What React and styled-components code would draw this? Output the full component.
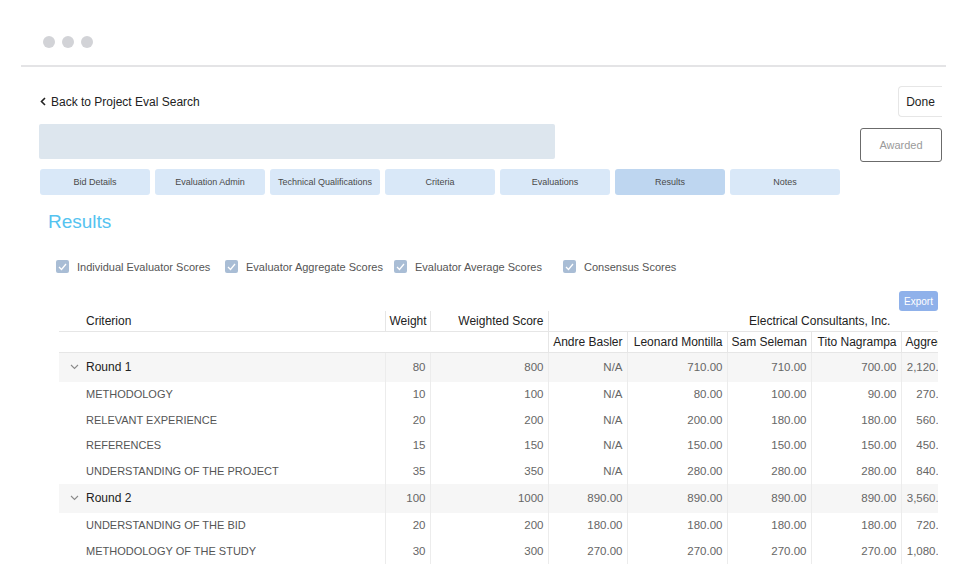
import React from "react";
import styled, { createGlobalStyle } from "styled-components";

const GlobalStyle = createGlobalStyle`
  body {
    margin: 0;
    background: #fff;
    font-family: "Liberation Sans", Arial, Helvetica, sans-serif;
    color: #333;
  }
`;

const Page = styled.div`
  width: 963px;
  height: 588px;
  overflow: hidden;
`;

const TitleBar = styled.div`
  display: flex;
  gap: 7px;
  height: 29px;
  padding: 36px 0 0 22px;
  margin: 0 17px 0 21px;
  border-bottom: 2px solid #e4e4e6;
`;

const Dot = styled.span`
  width: 12px;
  height: 12px;
  border-radius: 50%;
  background: #d2d3d7;
`;

const Content = styled.div`
  width: 903px;
  margin-left: 39px;
  padding-top: 19px;
  overflow: hidden;
`;

const TopRow = styled.div`
  display: flex;
  justify-content: space-between;
  align-items: center;
`;

const BackLink = styled.a`
  display: flex;
  align-items: center;
  gap: 5px;
  margin-left: 1px;
  font-size: 12px;
  color: #222;
  text-decoration: none;
`;

const DoneButton = styled.button`
  height: 31px;
  width: 44px;
  padding: 0;
  border: 1px solid #e6e6e6;
  border-right: none;
  border-radius: 4px 0 0 4px;
  background: #fff;
  font: inherit;
  font-size: 12px;
  color: #222;
`;

const NameRow = styled.div`
  display: flex;
  justify-content: space-between;
  align-items: flex-start;
  margin-top: 7px;
`;

const NameBar = styled.div`
  width: 516px;
  height: 35px;
  background: #dde6ee;
  border-radius: 2px;
`;

const AwardedButton = styled.button`
  margin-top: 4px;
  width: 82px;
  height: 34px;
  padding: 0;
  border: 1px solid #6b6b6b;
  border-radius: 3px;
  background: #fff;
  font: inherit;
  font-size: 11px;
  color: #9a9a9a;
`;

const Tabs = styled.nav`
  display: flex;
  gap: 5px;
  margin: 7px 0 0 1px;
`;

const Tab = styled.div`
  width: 110px;
  height: 26px;
  display: flex;
  align-items: center;
  justify-content: center;
  border-radius: 3px;
  background: ${(p) => (p.$active ? "#bed6f0" : "#d9e8f8")};
  font-size: 9px;
  color: #4a4a4a;
`;

const Title = styled.h1`
  margin: 15px 0 0 9px;
  font-size: 19px;
  line-height: 24px;
  font-weight: 400;
  color: #55c3f0;
`;

const Filters = styled.div`
  display: grid;
  grid-template-columns: repeat(4, 169px);
  margin: 26px 0 0 17px;
`;

const Filter = styled.label`
  display: flex;
  align-items: center;
  gap: 8px;
  font-size: 11px;
  color: #555;
`;

const Box = styled.span`
  width: 13px;
  height: 13px;
  border-radius: 2px;
  background: #a9bdd5;
  display: flex;
  align-items: center;
  justify-content: center;
`;

const TableTools = styled.div`
  display: flex;
  justify-content: flex-end;
  margin: 18px 4px 0 0;
`;

const ExportButton = styled.button`
  width: 39px;
  height: 20px;
  padding: 0;
  border: none;
  border-radius: 3px;
  background: #8fb1ea;
  font: inherit;
  font-size: 10px;
  color: #fff;
`;

const TableWrap = styled.div`
  width: 879px;
  margin-left: 20px;
  overflow: hidden;
`;

const Table = styled.table`
  table-layout: fixed;
  border-collapse: collapse;
  width: 1032px;
  font-size: 12px;
`;

const Th = styled.th`
  height: 20px;
  padding: 0 4px;
  font-weight: 400;
  color: #222;
  white-space: nowrap;
  overflow: ${(p) => (p.$spill ? "visible" : "hidden")};
  text-align: ${(p) => p.$align || "right"};
  border-bottom: 1px solid #e6e6e6;
  border-left: ${(p) => (p.$line ? "1px solid #e6e6e6" : "none")};
`;

const Row = styled.tr`
  background: ${(p) => (p.$group ? "#f6f6f6" : "#fff")};
  height: ${(p) => (p.$group ? "29px" : "25.5px")};
`;

const Td = styled.td`
  padding: 0 4px;
  text-align: right;
  white-space: nowrap;
  font-size: 11.5px;
  color: #666;
  border-left: 1px solid #ececec;
`;

const NameCell = styled.td`
  padding-left: ${(p) => (p.$group ? "11px" : "27px")};
  white-space: nowrap;
  font-size: ${(p) => (p.$group ? "12px" : "11px")};
  color: ${(p) => (p.$group ? "#222" : "#555")};
`;

const GroupLabel = styled.span`
  display: flex;
  align-items: center;
  gap: 7px;
`;

const Check = () => (
  <svg width="9" height="8" viewBox="0 0 9 8">
    <polyline points="1,4 3.5,6.5 8,1" fill="none" stroke="#fff" strokeWidth="1.3" />
  </svg>
);

const tabs = [
  "Bid Details",
  "Evaluation Admin",
  "Technical Qualifications",
  "Criteria",
  "Evaluations",
  "Results",
  "Notes",
];

const filters = [
  "Individual Evaluator Scores",
  "Evaluator Aggregate Scores",
  "Evaluator Average Scores",
  "Consensus Scores",
];

const evaluators = ["Andre Basler", "Leonard Montilla", "Sam Seleman", "Tito Nagrampa"];

const rows = [
  { name: "Round 1", group: true, weight: 80, ws: 800, scores: ["N/A", "710.00", "710.00", "700.00"], agg: "2,120.00" },
  { name: "METHODOLOGY", weight: 10, ws: 100, scores: ["N/A", "80.00", "100.00", "90.00"], agg: "270.00" },
  { name: "RELEVANT EXPERIENCE", weight: 20, ws: 200, scores: ["N/A", "200.00", "180.00", "180.00"], agg: "560.00" },
  { name: "REFERENCES", weight: 15, ws: 150, scores: ["N/A", "150.00", "150.00", "150.00"], agg: "450.00" },
  { name: "UNDERSTANDING OF THE PROJECT", weight: 35, ws: 350, scores: ["N/A", "280.00", "280.00", "280.00"], agg: "840.00" },
  { name: "Round 2", group: true, weight: 100, ws: 1000, scores: ["890.00", "890.00", "890.00", "890.00"], agg: "3,560.00" },
  { name: "UNDERSTANDING OF THE BID", weight: 20, ws: 200, scores: ["180.00", "180.00", "180.00", "180.00"], agg: "720.00" },
  { name: "METHODOLOGY OF THE STUDY", weight: 30, ws: 300, scores: ["270.00", "270.00", "270.00", "270.00"], agg: "1,080.00" },
];

export default function App() {
  return (
    <Page>
      <GlobalStyle />
      <TitleBar>
        <Dot />
        <Dot />
        <Dot />
      </TitleBar>
      <Content>
        <TopRow>
          <BackLink href="#">
            <svg width="6" height="9" viewBox="0 0 6 9">
              <polyline points="5,1 1.5,4.5 5,8" fill="none" stroke="#222" strokeWidth="1.6" />
            </svg>
            Back to Project Eval Search
          </BackLink>
          <DoneButton>Done</DoneButton>
        </TopRow>
        <NameRow>
          <NameBar />
          <AwardedButton>Awarded</AwardedButton>
        </NameRow>
        <Tabs>
          {tabs.map((t) => (
            <Tab key={t} $active={t === "Results"}>{t}</Tab>
          ))}
        </Tabs>
        <Title>Results</Title>
        <Filters>
          {filters.map((f) => (
            <Filter key={f}>
              <Box><Check /></Box>
              {f}
            </Filter>
          ))}
        </Filters>
        <TableTools>
          <ExportButton>Export</ExportButton>
        </TableTools>
        <TableWrap>
          <Table>
            <colgroup>
              <col style={{ width: 326 }} />
              <col style={{ width: 45 }} />
              <col style={{ width: 118 }} />
              <col style={{ width: 79 }} />
              <col style={{ width: 100 }} />
              <col style={{ width: 84 }} />
              <col style={{ width: 90 }} />
              <col style={{ width: 55 }} />
              <col style={{ width: 135 }} />
            </colgroup>
            <thead>
              <tr>
                <Th $align="left" style={{ paddingLeft: 27 }}>Criterion</Th>
                <Th $line>Weight</Th>
                <Th $line>Weighted Score</Th>
                <Th $line $align="center" colSpan={6}>Electrical Consultants, Inc.</Th>
              </tr>
              <tr>
                <Th />
                <Th />
                <Th />
                {evaluators.map((e) => (
                  <Th $line key={e}>{e}</Th>
                ))}
                <Th $line $spill $align="left">Aggregate</Th>
                <Th $line $align="left">Average</Th>
              </tr>
            </thead>
            <tbody>
              {rows.map((r) => (
                <Row key={r.name} $group={r.group}>
                  <NameCell $group={r.group}>
                    {r.group ? (
                      <GroupLabel>
                        <svg width="9" height="6" viewBox="0 0 9 6">
                          <polyline points="1,1 4.5,4.5 8,1" fill="none" stroke="#8a8a8a" strokeWidth="1.1" />
                        </svg>
                        {r.name}
                      </GroupLabel>
                    ) : (
                      r.name
                    )}
                  </NameCell>
                  <Td>{r.weight}</Td>
                  <Td>{r.ws}</Td>
                  {r.scores.map((s, i) => (
                    <Td key={i}>{s}</Td>
                  ))}
                  <Td>{r.agg}</Td>
                  <Td></Td>
                </Row>
              ))}
            </tbody>
          </Table>
        </TableWrap>
      </Content>
    </Page>
  );
}
